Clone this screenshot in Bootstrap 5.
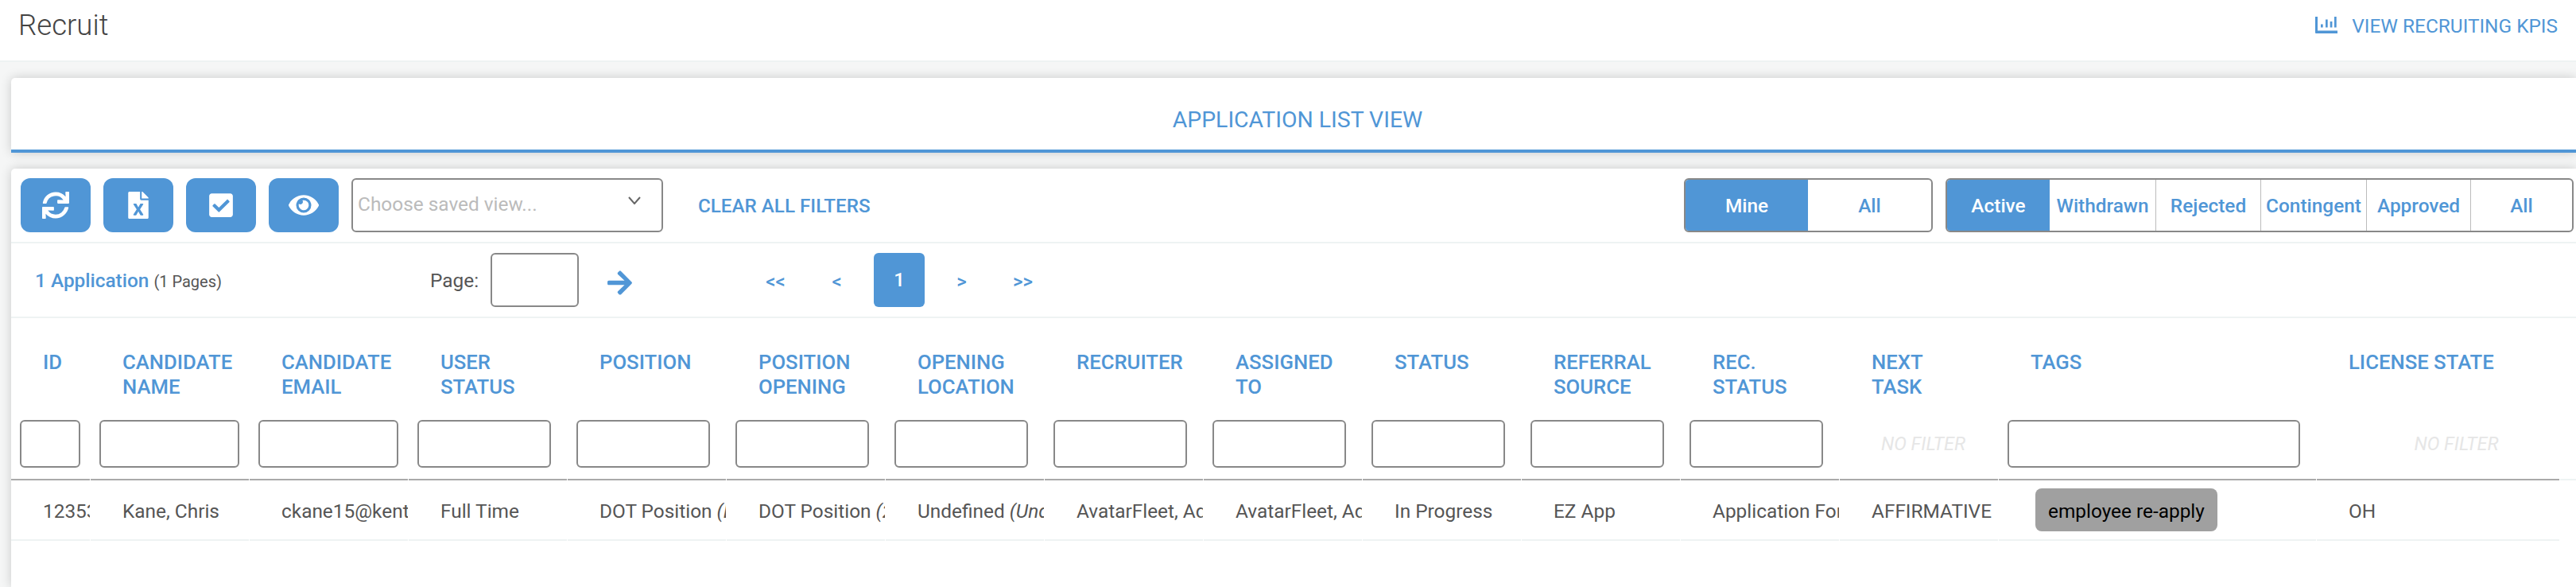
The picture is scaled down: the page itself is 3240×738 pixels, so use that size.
<!DOCTYPE html>
<html lang="en"><head><meta charset="utf-8"><title>Recruit</title>
<link href="https://cdn.jsdelivr.net/npm/bootstrap@5.3.0/dist/css/bootstrap.min.css" rel="stylesheet">
<style>
html,body{height:738px;overflow:hidden}
body{background:#f5f6f6;font-family:Roboto,"Liberation Sans",sans-serif;font-size:24.4px;color:#555;line-height:31px}
.topbar{height:78px;background:#fff;border-bottom:2px solid #eef3f3;padding:0 23px 11px}
.topbar h1{font-size:36.6px;font-weight:300;margin:0;color:#444;line-height:1}
.blue-link{color:#5096d6;text-decoration:none;font-weight:400;text-transform:uppercase}
.kpi-ico{width:28px;height:21px;margin-top:-3px}
.kpi-link{gap:18px}
.panel{margin-left:14px;background:#fff;box-shadow:0 0 14px rgba(0,0,0,.18);border-radius:5px 0 0 0}
.heading{margin-top:20px;height:94px;border-bottom:4px solid #5096d6;color:#5096d6;font-size:28.4px;font-weight:400;padding:37px 0 0 10px;line-height:31px}
.main-panel{margin-top:20px;height:526px}
.tools{padding:12px 3px 12px 12px;border-bottom:2px solid #eef3f3;height:94px}
.ico-btn{width:88px;height:68px;background:#5096d6;border:0;border-radius:12px;padding:0;margin-right:16px;color:#fff}
.ico-btn svg{fill:#fff;display:block;margin:auto}
.view-sel{width:392px;height:68px;border:2px solid #888;border-radius:6px;color:#bbb;padding:0 0 4px 6px}
.chev{margin-left:auto;margin-right:26px;margin-top:-8px}
.clear-f{margin-left:44px;font-weight:500;font-size:24.2px;padding-top:2px}
.seg{height:68px;border:2px solid #888;border-radius:6px;overflow:hidden}
.seg span{display:flex;flex:none;align-items:center;justify-content:center;color:#5096d6;font-weight:500;border-left:1px solid #bbb;height:100%}
.seg span:first-child{border-left:0;margin:-2px 0}
.seg span.on{background:#5096d6;color:#fff;height:68px}
.seg-a{margin-left:auto;width:313px}
.seg-a span:nth-child(1){width:154px}.seg-a span:nth-child(2){width:155px;border-left:0}
.seg-b{margin-left:16px;width:790px}
.seg-b span:nth-child(1){width:129px}.seg-b span:nth-child(2){width:133px;border-left:0}.seg-b span:nth-child(3){width:132px}.seg-b span:nth-child(4){width:133px}.seg-b span:nth-child(5){width:131px}.seg-b span:nth-child(6){width:128px}
.pager{height:94px;border-bottom:2px solid #eef3f3}
.count{width:527px;flex:none;padding:3px 0 0 30px;color:#5096d6;font-weight:500}
.count small{color:#555;font-size:20px;font-weight:400}
.page-lbl{width:62px;flex:none}
.pg-in{width:111px;height:68px;flex:none;border:2px solid #888;border-radius:6px;margin:0 36px 0 14px}
.go-arrow{margin-top:6px;flex:none}
.pg-links{margin-left:142px}
.pg-link{color:#5096d6;font-weight:500;font-size:24px;display:flex;justify-content:center;align-items:center;width:77px;height:68px;padding-top:4px}
.pg-link.cur{background:#5096d6;color:#fff;width:64px;border-radius:6px;margin:0 8px;padding-top:0}
.grid-t{table-layout:fixed;width:3227px;margin:0 0 0 -1px;border-collapse:separate;border-spacing:1px 0;--bs-table-bg:transparent}
.grid-t th,.grid-t td{border:0;overflow:hidden;white-space:nowrap;padding:0 0 0 40px;box-shadow:none;vertical-align:top}
.grid-t thead tr:first-child th{height:122px;padding:40px 12px 0 40px;white-space:normal;color:#5096d6;font-size:25.7px;font-weight:500;line-height:31px;text-transform:uppercase}
.grid-t thead tr:last-child th{height:82px;padding:6px 0 0 11px;border-bottom:2px solid #aaa;font-weight:400}
.grid-t thead tr:last-child th.tail{border-bottom-color:#eef3f3}
.f-in{display:block;height:60px;border:2px solid #888;border-radius:6px;width:168px}
.f-wide{width:176px}.f-id{width:76px}.f-tag{width:368px}
.no-f{display:block;text-align:center;font-style:italic;font-size:23.5px;color:#e6e6e6;line-height:60px;height:60px;text-transform:uppercase}
.no-f-end{padding-left:35px}
.grid-t tbody td{height:76px;padding-top:23px;border-bottom:2px solid #eef3f3;color:#555}
.grid-t tbody td.tail{border-bottom:0}
.grid-t tbody td.tag-cell{padding-top:10px}
.tag-pill{display:inline-block;vertical-align:top;background:#a0a0a0;color:#000;border-radius:8px;padding:13px 16px 0;height:54px;margin-left:6px}
</style></head><body>
<header class="topbar d-flex align-items-center justify-content-between">
<h1>Recruit</h1>
<a class="blue-link kpi-link d-flex align-items-center" href="#"><svg class="kpi-ico" viewBox="0 0 28 21" fill="#5096d6"><path d="M0 0h3v17.5h25V21H1a1 1 0 0 1-1-1z"/><rect x="7" y="9.5" width="2.7" height="4"/><rect x="13" y="3.5" width="2.7" height="10"/><rect x="18.7" y="6" width="2.7" height="7.5"/><rect x="24" y="0" width="2.7" height="13.5"/></svg><span>View Recruiting KPIs</span></a>
</header>
<section class="panel heading text-center">APPLICATION LIST VIEW</section>
<section class="panel main-panel">
<div class="tools d-flex align-items-center">
<button class="ico-btn" aria-label="Refresh"><svg width="34" height="34" viewBox="0 0 512 512"><path d="M440.65 12.57l4 82.77A247.16 247.16 0 0 0 255.83 8C134.73 8 33.91 94.92 12.29 209.82A12 12 0 0 0 24.09 224h49.05a12 12 0 0 0 11.67-9.26 175.91 175.91 0 0 1 317-56.94l-101.46-4.86a12 12 0 0 0-12.57 12v47.41a12 12 0 0 0 12 12H500a12 12 0 0 0 12-12V12a12 12 0 0 0-12-12h-47.37a12 12 0 0 0-11.98 12.57zM255.83 432a175.61 175.61 0 0 1-146-77.8l101.8 4.87a12 12 0 0 0 12.57-12v-47.4a12 12 0 0 0-12-12H12a12 12 0 0 0-12 12V500a12 12 0 0 0 12 12h47.35a12 12 0 0 0 12-12.6l-4.15-82.57A247.17 247.17 0 0 0 255.83 504c121.11 0 221.93-86.92 243.55-201.82a12 12 0 0 0-11.8-14.18h-49.05a12 12 0 0 0-11.67 9.26A175.86 175.86 0 0 1 255.83 432z"/></svg></button>
<button class="ico-btn" aria-label="Excel"><svg width="26" height="34" viewBox="0 0 384 512"><path d="M224 136V0H24C10.7 0 0 10.7 0 24v464c0 13.3 10.7 24 24 24h336c13.3 0 24-10.7 24-24V160H248c-13.2 0-24-10.8-24-24zm60.1 106.5L224 336l60.1 93.5c5.1 8-.6 18.5-10.1 18.5h-34.9c-4.4 0-8.5-2.4-10.6-6.3C208.9 405.5 192 373 192 373c-6.4 14.8-10 20-36.6 68.8-2.1 3.9-6.1 6.3-10.5 6.3H110c-9.5 0-15.2-10.5-10.1-18.5l60.3-93.5-60.3-93.5c-5.2-8 .6-18.5 10.1-18.5h34.8c4.4 0 8.5 2.4 10.6 6.3 26.1 48.8 20 33.6 36.6 68.5 0 0 6.1-11.7 36.6-68.5 2.1-3.9 6.2-6.3 10.6-6.3H274c9.5-.1 15.2 10.4 10.1 18.4zM384 121.9v6.1H256V0h6.1c6.4 0 12.5 2.5 17 7l97.9 98c4.5 4.5 7 10.6 7 16.9z"/></svg></button>
<button class="ico-btn" aria-label="Select"><svg width="30" height="34" viewBox="0 0 448 512"><path d="M400 480H48c-26.51 0-48-21.49-48-48V80c0-26.51 21.49-48 48-48h352c26.51 0 48 21.49 48 48v352c0 26.51-21.49 48-48 48zm-204.686-98.059l184-184c6.248-6.248 6.248-16.379 0-22.627l-22.627-22.627c-6.248-6.248-16.379-6.249-22.628 0L184 302.745l-70.059-70.059c-6.248-6.248-16.379-6.248-22.628 0l-22.627 22.627c-6.248 6.248-6.248 16.379 0 22.627l104 104c6.249 6.25 16.379 6.25 22.628.001z"/></svg></button>
<button class="ico-btn" aria-label="View"><svg width="38" height="34" viewBox="0 0 576 512"><path d="M572.52 241.4C518.29 135.59 410.93 64 288 64S57.68 135.64 3.48 241.41a32.35 32.35 0 0 0 0 29.19C57.71 376.41 165.07 448 288 448s230.32-71.64 284.52-177.41a32.35 32.35 0 0 0 0-29.19zM288 400a144 144 0 1 1 144-144 143.93 143.93 0 0 1-144 144zm0-240a95.31 95.31 0 0 0-25.31 3.79 47.85 47.85 0 0 1-66.9 66.9A95.78 95.78 0 1 0 288 160z"/></svg></button>
<div class="view-sel d-flex align-items-center"><span>Choose saved view...</span><svg class="chev" width="16" height="10" viewBox="0 0 16 10" fill="none" stroke="#666" stroke-width="2"><path d="M1 1l7 8 7-8"/></svg></div>
<a class="blue-link clear-f" href="#">Clear all filters</a>
<div class="seg seg-a d-flex"><span class="on">Mine</span><span>All</span></div>
<div class="seg seg-b d-flex"><span class="on">Active</span><span>Withdrawn</span><span>Rejected</span><span>Contingent</span><span>Approved</span><span>All</span></div>
</div>
<div class="pager d-flex align-items-center">
<div class="count">1 Application <small>(1 Pages)</small></div>
<span class="page-lbl">Page:</span><div class="pg-in"></div>
<svg class="go-arrow" width="31" height="31" viewBox="0 30 448 450" fill="#5096d6"><path d="M190.5 66.9l22.2-22.2c9.4-9.4 24.6-9.4 33.9 0L441 239c9.4 9.4 9.4 24.6 0 33.9L246.6 467.3c-9.4 9.4-24.6 9.4-33.9 0l-22.2-22.2c-9.5-9.5-9.3-25 .4-34.3L311.4 296H24c-13.3 0-24-10.7-24-24v-32c0-13.3 10.7-24 24-24h287.4L190.9 101.2c-9.8-9.3-10-24.8-.4-34.3z"/></svg>
<div class="pg-links d-flex align-items-center"><span class="pg-link">&lt;&lt;</span><span class="pg-link">&lt;</span><span class="pg-link cur">1</span><span class="pg-link">&gt;</span><span class="pg-link">&gt;&gt;</span></div>
</div>
<table class="table grid-t">
<colgroup><col style="width:99px"><col span="12" style="width:199px"><col style="width:399px"><col style="width:305px"><col style="width:20px"></colgroup>
<thead><tr><th>ID</th><th>Candidate Name</th><th>Candidate Email</th><th>User Status</th><th>Position</th><th>Position Opening</th><th>Opening Location</th><th>Recruiter</th><th>Assigned To</th><th>Status</th><th>Referral Source</th><th>Rec. Status</th><th>Next<br>Task</th><th>Tags</th><th>License State</th><th class="tail"></th></tr>
<tr><th><span class="f-in f-id"></span></th><th><span class="f-in f-wide"></span></th><th><span class="f-in f-wide"></span></th><th><span class="f-in"></span></th><th><span class="f-in"></span></th><th><span class="f-in"></span></th><th><span class="f-in"></span></th><th><span class="f-in"></span></th><th><span class="f-in"></span></th><th><span class="f-in"></span></th><th><span class="f-in"></span></th><th><span class="f-in"></span></th><th><span class="no-f">No filter</span></th><th><span class="f-in f-tag"></span></th><th><span class="no-f no-f-end">No filter</span></th><th class="tail"></th></tr></thead>
<tbody><tr><td>12353</td><td>Kane, Chris</td><td>ckane15@kent.edu</td><td>Full Time</td><td>DOT Position <i>(Driver)</i></td><td>DOT Position <i>(2021)</i></td><td>Undefined <i>(Undefined)</i></td><td>AvatarFleet, Admin</td><td>AvatarFleet, Admin</td><td>In Progress</td><td>EZ App</td><td>Application Form</td><td>AFFIRMATIVE</td><td class="tag-cell"><span class="tag-pill">employee re-apply</span></td><td>OH</td><td class="tail"></td></tr></tbody>
</table>
</section>
</body></html>
